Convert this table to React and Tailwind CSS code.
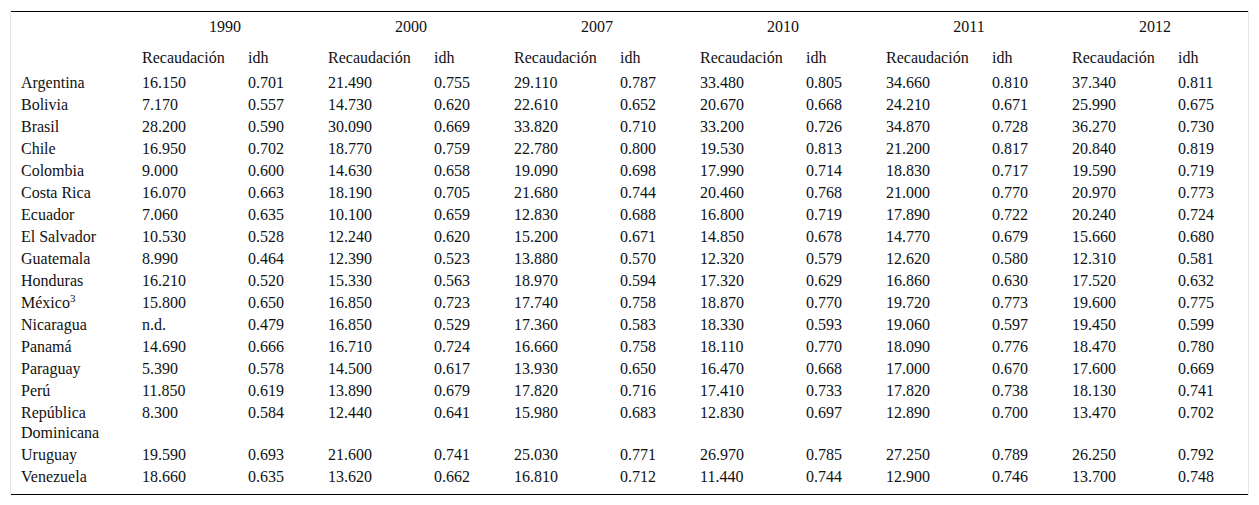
const YEARS = ["1990", "2000", "2007", "2010", "2011", "2012"];

const ROWS = [
  ["Argentina", "16.150", "0.701", "21.490", "0.755", "29.110", "0.787", "33.480", "0.805", "34.660", "0.810", "37.340", "0.811"],
  ["Bolivia", "7.170", "0.557", "14.730", "0.620", "22.610", "0.652", "20.670", "0.668", "24.210", "0.671", "25.990", "0.675"],
  ["Brasil", "28.200", "0.590", "30.090", "0.669", "33.820", "0.710", "33.200", "0.726", "34.870", "0.728", "36.270", "0.730"],
  ["Chile", "16.950", "0.702", "18.770", "0.759", "22.780", "0.800", "19.530", "0.813", "21.200", "0.817", "20.840", "0.819"],
  ["Colombia", "9.000", "0.600", "14.630", "0.658", "19.090", "0.698", "17.990", "0.714", "18.830", "0.717", "19.590", "0.719"],
  ["Costa Rica", "16.070", "0.663", "18.190", "0.705", "21.680", "0.744", "20.460", "0.768", "21.000", "0.770", "20.970", "0.773"],
  ["Ecuador", "7.060", "0.635", "10.100", "0.659", "12.830", "0.688", "16.800", "0.719", "17.890", "0.722", "20.240", "0.724"],
  ["El Salvador", "10.530", "0.528", "12.240", "0.620", "15.200", "0.671", "14.850", "0.678", "14.770", "0.679", "15.660", "0.680"],
  ["Guatemala", "8.990", "0.464", "12.390", "0.523", "13.880", "0.570", "12.320", "0.579", "12.620", "0.580", "12.310", "0.581"],
  ["Honduras", "16.210", "0.520", "15.330", "0.563", "18.970", "0.594", "17.320", "0.629", "16.860", "0.630", "17.520", "0.632"],
  ["México", "15.800", "0.650", "16.850", "0.723", "17.740", "0.758", "18.870", "0.770", "19.720", "0.773", "19.600", "0.775"],
  ["Nicaragua", "n.d.", "0.479", "16.850", "0.529", "17.360", "0.583", "18.330", "0.593", "19.060", "0.597", "19.450", "0.599"],
  ["Panamá", "14.690", "0.666", "16.710", "0.724", "16.660", "0.758", "18.110", "0.770", "18.090", "0.776", "18.470", "0.780"],
  ["Paraguay", "5.390", "0.578", "14.500", "0.617", "13.930", "0.650", "16.470", "0.668", "17.000", "0.670", "17.600", "0.669"],
  ["Perú", "11.850", "0.619", "13.890", "0.679", "17.820", "0.716", "17.410", "0.733", "17.820", "0.738", "18.130", "0.741"],
  ["República Dominicana", "8.300", "0.584", "12.440", "0.641", "15.980", "0.683", "12.830", "0.697", "12.890", "0.700", "13.470", "0.702"],
  ["Uruguay", "19.590", "0.693", "21.600", "0.741", "25.030", "0.771", "26.970", "0.785", "27.250", "0.789", "26.250", "0.792"],
  ["Venezuela", "18.660", "0.635", "13.620", "0.662", "16.810", "0.712", "11.440", "0.744", "12.900", "0.746", "13.700", "0.748"],
];

export default function App() {
  return (
    <main className="min-h-screen bg-white pt-[10px] font-[family-name:Liberation_Serif,serif] text-[16px] text-[#111]">
      <div className="mx-[10px] border-x border-[#e6e6e6] pt-px">
        <table className="w-[1237px] table-fixed border-collapse border-y border-black leading-[20px]">
          <colgroup>
            <col className="w-[121px]" />
            {YEARS.map((year) => (
              <>
                <col key={year + "r"} className="w-[106px]" />
                <col key={year + "i"} className="w-[80px]" />
              </>
            ))}
          </colgroup>
          <thead>
            <tr className="h-[30px]">
              <th />
              {YEARS.map((year) => (
                <th key={year} colSpan={2} className="pt-px text-center font-normal">{year}</th>
              ))}
            </tr>
            <tr className="h-[30px]">
              <th />
              {YEARS.map((year) => (
                <>
                  <th key={year + "r"} className="pl-[10px] pt-[3px] text-left font-normal">Recaudación</th>
                  <th key={year + "i"} className="pl-[10px] pt-[3px] text-left font-normal">idh</th>
                </>
              ))}
            </tr>
          </thead>
          <tbody>
            {ROWS.map((row, i) => {
              const last = i === ROWS.length - 1;
              return (
                <tr key={row[0]}>
                  {row.map((cell, j) => (
                    <td key={j} className={last ? "pl-[10px] pt-px pb-[7px] align-top" : "pl-[10px] py-px align-top"}>
                      {cell}
                      {cell === "México" && <sup className="text-[11px]">3</sup>}
                    </td>
                  ))}
                </tr>
              );
            })}
          </tbody>
        </table>
      </div>
    </main>
  );
}
